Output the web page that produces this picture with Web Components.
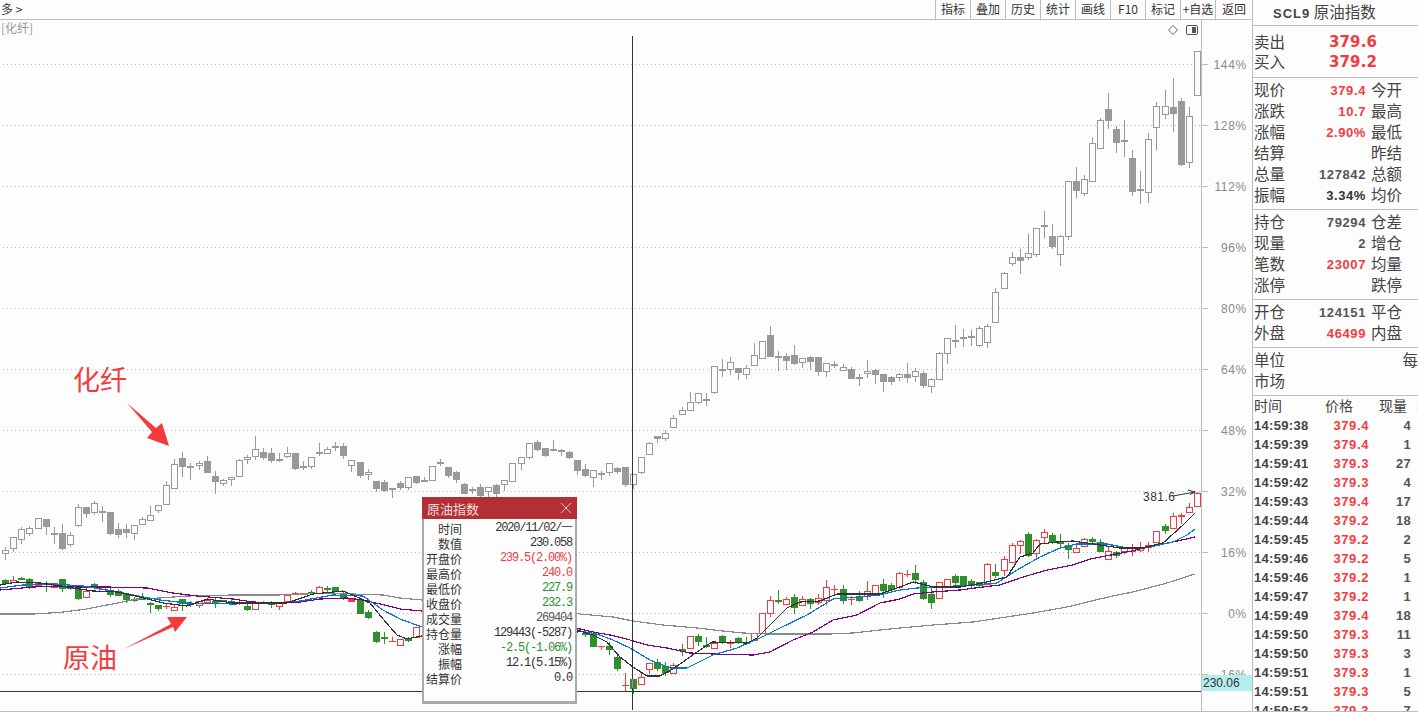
<!doctype html>
<html lang="zh">
<head>
<meta charset="utf-8">
<title>SCL9 原油指数</title>
<style>
  html, body { margin: 0; height: 100%; overflow: hidden; background: #fdfdfd; }
  body { font: 12px "Noto Sans CJK SC", "Liberation Sans", sans-serif; color: #333; }
</style>
</head>
<body>
<tdx-screen>
  <tool-bar slot="bar" title-text="多 &gt;">
    <tool-btn>指标</tool-btn><tool-btn>叠加</tool-btn><tool-btn>历史</tool-btn>
    <tool-btn>统计</tool-btn><tool-btn>画线</tool-btn><tool-btn>F10</tool-btn>
    <tool-btn>标记</tool-btn><tool-btn>+自选</tool-btn><tool-btn wide>返回</tool-btn>
  </tool-bar>

  <kline-chart slot="chart">
    <chart-note style="left:73px;top:343px">化纤</chart-note>
    <chart-note style="left:63px;top:621px">原油</chart-note>
    <data-window caption="原油指数" style="left:422px;top:477px">
      <data-row label="时间">2020/11/02/一</data-row>
      <data-row label="数值">230.058</data-row>
      <data-row label="开盘价" tone="up">239.5(2.00%)</data-row>
      <data-row label="最高价" tone="up">240.0</data-row>
      <data-row label="最低价" tone="down">227.9</data-row>
      <data-row label="收盘价" tone="down">232.3</data-row>
      <data-row label="成交量" tone="mute">269404</data-row>
      <data-row label="持仓量">129443(-5287)</data-row>
      <data-row label="涨幅" tone="down">-2.5(-1.06%)</data-row>
      <data-row label="振幅">12.1(5.15%)</data-row>
      <data-row label="结算价">0.0</data-row>
    </data-window>
  </kline-chart>

  <quote-panel slot="side">
    <quote-section pad="6 5">
      <quote-row big label="卖出" tone="up">379.6</quote-row>
      <quote-row big label="买入" tone="up">379.2</quote-row>
    </quote-section>
    <quote-section>
      <quote-row label="现价" right="今开" tone="up">379.4</quote-row>
      <quote-row label="涨跌" right="最高" tone="up">10.7</quote-row>
      <quote-row label="涨幅" right="最低" tone="up">2.90%</quote-row>
      <quote-row label="结算" right="昨结"></quote-row>
      <quote-row label="总量" right="总额">127842</quote-row>
      <quote-row label="振幅" right="均价" tone="dark">3.34%</quote-row>
    </quote-section>
    <quote-section>
      <quote-row label="持仓" right="仓差">79294</quote-row>
      <quote-row label="现量" right="增仓">2</quote-row>
      <quote-row label="笔数" right="均量" tone="up">23007</quote-row>
      <quote-row label="涨停" right="跌停"></quote-row>
    </quote-section>
    <quote-section>
      <quote-row label="开仓" right="平仓">124151</quote-row>
      <quote-row label="外盘" right="内盘" tone="up">46499</quote-row>
    </quote-section>
    <quote-section>
      <quote-row label="单位" far="每"></quote-row>
      <quote-row label="市场"></quote-row>
    </quote-section>
    <tick-list></tick-list>
  </quote-panel>
</tdx-screen>

<script>
/* page frame: chart column on the left, quote column on the right */
class TdxScreen extends HTMLElement {
  constructor() {
    super();
    this.attachShadow({ mode: "open" }).innerHTML = `
      <style>
        :host { display: grid; grid-template-columns: 1252px 166px; height: 711px; border-bottom: 1px solid #bdbdbd; box-sizing: content-box; overflow: hidden; }
        .left { display: flex; flex-direction: column; min-width: 0; }
        .side { border-left: 1px solid #bdbdbd; min-width: 0; overflow: hidden; }
      </style>
      <div class="left"><slot name="bar"></slot><slot name="chart"></slot></div>
      <div class="side"><slot name="side"></slot></div>`;
  }
}

class ToolBar extends HTMLElement {
  constructor() {
    super();
    this.attachShadow({ mode: "open" }).innerHTML = `
      <style>
        :host { display: flex; justify-content: space-between; height: 19px; border-bottom: 1px solid #bdbdbd; font-size: 12px; line-height: 18px; color: #333; }
        .name { padding-left: 1px; }
        .btns { display: flex; }
      </style>
      <span class="name"></span>
      <div class="btns"><slot></slot></div>`;
  }
  connectedCallback() {
    this.shadowRoot.querySelector(".name").textContent = this.getAttribute("title-text");
  }
}

class ToolBtn extends HTMLElement {
  constructor() {
    super();
    this.attachShadow({ mode: "open" }).innerHTML = `
      <style>
        :host { display: block; box-sizing: border-box; width: 35px; border-left: 1px solid #bdbdbd; text-align: center; white-space: nowrap; }
        :host([wide]) { width: 37px; }
      </style><slot></slot>`;
  }
}

/* page-pixel series read off the screen: [bodyTop, bodyBottom, high, low, kind]
   kind: 0 hollow, 1 filled (grey / green), 2 filled red. top == bottom draws a cross */
const GREY = [
  [550,553,547,559,0],[537,548,537,551,0],[529,539,527,543,0],[528,533,526,535,0],[518,528,518,528,0],
  [519,526,519,534,1],[533,533,527,543,1],[533,548,524,549,1],[535,544,532,546,0],[507,525,504,526,0],
  [507,513,507,517,1],[503,512,501,514,0],[511,511,506,521,1],[512,533,512,534,1],[529,534,523,537,1],
  [529,532,524,537,1],[525,533,525,539,0],[519,524,517,524,0],[515,520,506,520,0],[505,510,505,512,0],
  [485,504,481,504,0],[464,488,459,488,0],[458,466,452,476,1],[466,466,463,479,1],[463,465,461,469,0],
  [461,472,456,472,1],[476,481,471,493,1],[480,483,479,485,0],[477,479,477,485,0],[460,476,459,476,0],
  [457,459,455,463,0],[449,456,436,459,0],[452,457,448,459,1],[453,460,448,462,1],[459,459,453,461,1],
  [453,456,447,457,0],[453,468,453,469,1],[466,466,461,469,1],[457,466,457,468,0],[452,452,443,455,1],
  [449,453,447,453,0],[446,446,442,450,1],[446,455,443,458,1],[460,465,460,471,0],[462,475,462,477,1],
  [472,474,469,479,0],[481,488,481,491,1],[482,490,480,491,1],[488,488,488,497,1],[483,487,481,489,1],
  [477,487,477,489,0],[476,482,476,483,1],[480,480,477,481,1],[466,480,466,480,0],[462,463,459,465,1],
  [467,475,467,477,1],[472,479,471,482,1],[484,493,483,493,1],[489,489,487,493,1],[487,495,484,496,1],
  [487,491,487,496,0],[485,493,484,497,1],[480,484,480,490,0],[463,481,463,481,0],[457,463,457,469,0],
  [443,457,443,458,0],[442,449,440,450,1],[448,455,448,456,1],[449,449,440,450,1],[450,450,449,455,1],
  [452,457,451,458,1],[460,470,460,474,1],[469,475,464,476,1],[470,477,470,486,0],[473,473,471,479,1],
  [463,472,463,475,0],[468,471,467,473,1],[467,484,467,486,1],[474,484,474,488,0],[457,472,457,473,0],
  [443,454,442,454,0],[436,438,436,442,1],[433,438,430,440,0],[418,427,415,427,0],[410,414,407,414,0],
  [402,410,392,410,0],[393,402,393,403,0],[399,399,393,405,1],[366,392,366,393,0],[369,369,359,376,1],
  [362,369,357,374,0],[368,372,368,379,1],[368,374,365,378,0],[355,365,343,365,0],[341,358,341,358,0],
  [335,356,326,356,1],[356,356,351,370,1],[356,360,353,369,1],[355,363,345,364,1],[358,362,358,367,0],
  [357,361,356,369,1],[357,371,357,375,1],[363,371,363,376,0],[364,364,361,367,1],[367,370,364,370,0],
  [369,378,367,378,1],[377,377,374,385,1],[371,373,360,377,0],[370,374,369,383,1],[374,381,374,391,1],
  [377,381,376,384,1],[374,377,373,380,0],[374,377,363,382,1],[371,376,368,381,0],[373,385,371,387,1],
  [379,386,378,392,0],[353,379,352,379,0],[338,353,338,363,0],[340,340,325,347,1],[337,337,329,346,1],
  [336,336,330,345,1],[328,345,326,346,0],[326,342,324,347,0],[292,322,288,322,0],[273,288,272,288,0],
  [257,263,252,265,0],[257,260,249,273,1],[253,257,234,259,0],[228,254,228,256,0],[225,225,211,237,1],
  [236,246,224,248,1],[236,254,235,265,0],[181,236,181,239,0],[181,190,167,197,1],[179,193,175,195,0],
  [143,181,137,181,0],[120,148,118,148,0],[109,120,93,128,1],[129,142,126,152,1],[140,140,120,156,1],
  [158,191,150,195,1],[189,189,171,203,1],[139,192,133,202,0],[106,127,102,149,0],[106,114,90,118,0],
  [107,113,78,131,1],[101,164,98,165,1],[116,162,107,167,0],[51,95,51,95,0]
];

const COLOR = [
  [580,583,579,584,1],[580,582,576,582,0],[578,578,577,579,1],[579,586,578,588,1],[583,585,583,585,0],
  [583,583,581,591,1],[583,587,583,587,0],[579,588,579,591,1],[587,587,585,589,1],[589,598,589,599,1],
  [591,597,588,597,0],[584,587,583,587,1],[587,591,587,591,0],[590,594,587,596,1],[591,595,589,595,1],
  [594,599,594,602,1],[599,599,597,601,1],[598,598,593,599,1],[603,603,602,612,1],[605,608,605,610,1],
  [606,606,603,608,2],[607,610,604,610,0],[599,603,599,610,1],[603,603,601,606,1],[601,605,601,607,0],
  [600,602,600,602,0],[601,601,597,607,1],[600,601,600,601,1],[601,601,599,603,1],[603,603,601,604,2],
  [606,609,603,610,1],[602,609,602,609,0],[602,602,601,603,2],[603,603,601,607,1],[602,606,602,609,0],
  [595,601,595,601,0],[593,593,592,594,2],[593,594,593,594,2],[592,592,590,594,1],[587,593,586,593,0],
  [588,588,586,591,1],[587,591,587,591,1],[593,598,591,599,1],[599,601,599,601,2],[600,613,600,613,1],
  [612,617,610,618,1],[632,641,631,642,1],[637,637,632,643,1],[641,641,637,641,2],[639,645,639,645,0],
  [639,639,637,641,1],[627,637,627,637,0],
  null,null,null,null,null,null,null,null,null,null,null,null,null,null,null,null,null,null,null,
  [630,630,629,632,1],[633,633,631,636,1],[634,646,634,646,1],[646,646,646,649,2],[646,649,642,654,1],
  [657,668,655,670,1],[685,685,673,690,2],[679,688,679,693,1],[677,684,673,684,0],[663,669,663,673,0],
  [662,668,659,670,1],[666,672,662,675,1],[665,673,663,673,0],[649,649,644,655,1],[636,648,636,648,0],
  [636,641,634,645,1],[645,645,637,647,1],[643,648,643,648,0],[636,642,635,643,1],[643,643,640,647,2],
  [638,641,637,643,1],[642,642,637,643,1],[633,640,633,640,0],[613,633,613,633,0],[600,613,596,616,0],
  [600,600,590,603,1],[599,604,597,604,0],[597,607,594,613,1],[599,605,596,605,0],[599,603,598,608,1],
  [598,602,594,604,0],[587,600,580,604,0],[589,589,585,593,2],[589,600,585,603,1],[599,599,596,604,2],
  [597,600,591,601,1],[591,596,581,599,0],[585,593,585,593,0],[584,590,579,597,1],[585,589,583,592,1],
  [573,587,572,588,0],[574,574,570,576,2],[573,579,565,583,1],[582,598,580,599,1],[594,602,588,608,1],
  [582,598,582,598,0],[579,587,579,587,0],[576,582,574,585,1],[576,584,576,585,1],[581,585,579,587,1],
  [582,585,582,587,1],[564,584,563,584,0],[572,575,564,577,1],[559,570,556,575,0],[545,562,543,562,0],
  [541,545,540,553,0],[534,555,532,556,1],[540,553,539,557,0],[532,537,529,543,0],[535,541,533,543,1],
  [542,542,534,548,1],[545,549,543,558,1],[548,552,545,552,0],[539,546,538,546,0],[539,541,537,543,1],
  [542,551,539,551,1],[551,559,547,559,0],[552,555,551,557,1],[548,551,547,553,0],[551,551,544,555,2],
  [548,550,542,551,0],[545,547,542,551,0],[531,542,531,542,0],[526,530,524,533,1],[516,528,513,528,0],
  [515,516,513,523,0],[507,512,503,512,0],[493,506,492,506,0]
];

const LINES = [
  { color: "#8a8a8a", pts: "0,614 33,614 50,613 63,612 87,609 107,605 123,602 137,599 160,598 187,596 233,595 277,595 333,593 353,594 383,595 400,598 422,600 577,613 580,614 613,617 633,621 663,625 697,628 723,631 743,633 767,634 807,634 830,634 853,633 880,630 900,628 933,625 973,622 1033,613 1067,607 1100,599 1113,596 1133,592 1167,583 1195,574" },
  { color: "#800080", pts: "0,590 33,587 60,586 77,587 107,587 147,588 173,593 197,596 233,599 253,602 277,603 300,602 320,599 347,598 363,600 380,604 400,609 422,611 580,629 593,632 610,635 630,640 647,645 667,648 690,653 713,654 753,655 770,652 793,640 813,632 833,620 857,615 880,603 900,599 913,594 933,592 960,590 983,587 1000,585 1020,578 1047,570 1073,565 1090,559 1127,552 1157,545 1173,542 1195,537" },
  { color: "#0078d4", pts: "0,588 23,585 53,584 83,586 113,591 133,595 160,600 187,603 233,604 277,603 300,601 333,595 363,596 383,610 400,619 422,627 580,631 597,634 613,640 630,648 650,660 670,668 687,668 713,655 737,648 760,638 780,628 807,615 833,599 857,597 880,595 900,590 917,588 937,587 973,585 997,583 1017,570 1040,557 1060,548 1077,544 1107,544 1127,548 1150,547 1173,542 1187,535 1195,529" },
  { color: "#333333", pts: "0,585 17,582 40,583 67,587 93,591 117,592 140,597 163,603 187,606 207,599 233,603 263,603 287,603 313,594 343,591 357,597 370,603 383,619 397,635 407,639 422,636 580,631 593,635 607,642 620,657 633,667 647,676 660,676 673,669 697,652 712,642 747,643 757,638 770,625 787,608 800,602 820,601 837,594 880,594 897,588 913,582 933,587 960,587 983,583 1007,577 1020,557 1033,553 1040,544 1057,542 1073,541 1100,545 1120,548 1143,548 1163,543 1183,525 1195,513" }
];

const AXIS = ["144%","128%","112%","96%","80%","64%","48%","32%","16%","0%"];

const svgCandles = (rows, hollow, filled, alt) => rows.map((c, i) => {
  if (!c) return "";
  const x = Math.round(5.3 + 8.05 * i) + 0.5;
  const [t, b, hi, lo, kind] = c;
  const col = kind === 0 ? hollow : kind === 2 ? alt : filled;
  let s = `<path d="M${x} ${hi}V${lo + 1}" stroke="${col}"/>`;
  if (t === b) s += `<rect x="${x - 3.5}" y="${t}" width="7" height="${kind === 2 ? 1 : 2}" fill="${col}"/>`;
  else if (kind === 0) s += `<rect x="${x - 3}" y="${t + 0.5}" width="6" height="${b - t}" fill="#fdfdfd" stroke="${col}"/>`;
  else s += `<rect x="${x - 3.5}" y="${t}" width="7" height="${b - t + 1}" fill="${col}"/>`;
  return s;
}).join("");

const dotted = y => `<path d="M3 ${y}.5H1201" stroke="#bbb" stroke-dasharray="1 3"/><path d="M1202 ${y}.5h6" stroke="#bbb"/>`;

class KlineChart extends HTMLElement {
  constructor() {
    super();
    const grid = AXIS.concat("-16%").map((t, i) => {
      const y = 64 + 61 * i;
      return dotted(y) + `<text x="1247" y="${y + 4.5}" text-anchor="end">${t}</text>`;
    }).join("");
    this.attachShadow({ mode: "open" }).innerHTML = `
      <style>
        :host { display: block; position: relative; flex: 1; }
        svg { display: block; }
        text { font: 12px "Liberation Sans", sans-serif; letter-spacing: .7px; fill: #8a8a8a; }
        .candles path, .candles rect, .hair, polyline { shape-rendering: crispEdges; }
        .tag { fill: #333; }
        .stamp { font: 12px "Noto Sans CJK SC", sans-serif; letter-spacing: 0; fill: #999; }
      </style>
      <svg width="1252" height="691" viewBox="0 20 1252 691">
        ${grid}
        <path class="hair" d="M1201.5 20V711" stroke="#bdbdbd"/>
        <text class="stamp" x="1" y="33">[化纤]</text>
        <path d="M1173 25.5l4.5 4.5-4.5 4.5-4.5-4.5z" fill="none" stroke="#666"/>
        <rect x="1186.5" y="25.5" width="11" height="9" rx="1.5" fill="#fdfdfd" stroke="#555"/>
        <rect x="1192" y="27" width="4" height="6" fill="#555"/>
        <g class="candles">${svgCandles(GREY, "#999", "#999", "#999")}</g>
        <g class="candles">${svgCandles(COLOR, "#f33b3f", "#2f8f2f", "#f33b3f")}</g>
        ${LINES.map(l => `<polyline points="${l.pts}" fill="none" stroke="${l.color}" stroke-width="1.2"/>`).join("")}
        <path class="hair" d="M632.5 36V710M0 691.5H1201" stroke="#333" fill="none"/>
        <path class="hair" d="M632.5 679V688" stroke="#d860d8"/>
        <text class="tag" x="1143" y="501" style="letter-spacing:.5px">381.6</text>
        <path d="M1173 496L1195 492M1188 490L1195 492L1190 494.5" fill="none" stroke="#333"/>
        <path d="M127 403L156 428L162 423L169 446L147 438L152 432Z" fill="#f33b3f"/>
        <path d="M124 649L171 624L167 617L187 617L175 632L173 627Z" fill="#f33b3f"/>
        <rect x="1202" y="675" width="50" height="16" fill="#b4eeee"/>
        <text x="1203" y="687" style="fill:#333;letter-spacing:0">230.06</text>
      </svg>
      <slot></slot>`;
  }
}

class ChartNote extends HTMLElement {
  constructor() {
    super();
    this.attachShadow({ mode: "open" }).innerHTML = `
      <style>
        :host { position: absolute; font: 27px/1.15 "Noto Sans CJK SC", sans-serif; color: #f33b3f; white-space: nowrap; }
      </style><slot></slot>`;
  }
}

/* floating data window over the chart */
class DataWindow extends HTMLElement {
  constructor() {
    super();
    this.attachShadow({ mode: "open" }).innerHTML = `
      <style>
        :host { position: absolute; display: block; box-sizing: border-box; width: 155px; height: 207px; background: #fdfdfd; border: 2px solid #aaa; border-top: 0; border-bottom-width: 3px; }
        header { display: flex; align-items: center; justify-content: space-between; height: 22px; margin: 0 -2px; padding: 0 5px; background: #b32f33; color: #f4dede; font-size: 13px; }
        .rows { padding-top: 2px; }
        svg { display: block; }
      </style>
      <header><span class="cap"></span>
        <svg width="12" height="12" viewBox="0 0 12 12"><path d="M1 1L11 11M11 1L1 11" stroke="#e8c4c4"/></svg>
      </header>
      <div class="rows"><slot></slot></div>`;
  }
  connectedCallback() {
    this.shadowRoot.querySelector(".cap").textContent = this.getAttribute("caption");
  }
}

class DataRow extends HTMLElement {
  constructor() {
    super();
    this.attachShadow({ mode: "open" }).innerHTML = `
      <style>
        :host { display: flex; justify-content: space-between; height: 15px; line-height: 15px; padding-right: 3px; color: #333; white-space: nowrap; }
        :host([tone="up"]) .v { color: #f33b3f; }
        :host([tone="down"]) .v { color: #2f8f2f; }
        :host([tone="mute"]) .v { color: #555; }
        .k { width: 36px; padding-left: 2px; text-align: right; font-size: 12px; }
        .v { font: 12px/15px "Liberation Mono", monospace; letter-spacing: -1.2px; }
      </style>
      <span class="k"></span><span class="v"><slot></slot></span>`;
  }
  connectedCallback() {
    this.shadowRoot.querySelector(".k").textContent = this.getAttribute("label");
  }
}

class QuotePanel extends HTMLElement {
  constructor() {
    super();
    this.attachShadow({ mode: "open" }).innerHTML = `
      <style>
        :host { display: block; height: 711px; font-size: 15.5px; color: #444; overflow: hidden; }
        .title { box-sizing: border-box; height: 26px; border-bottom: 1px solid #bdbdbd; line-height: 23px; padding-left: 20px; white-space: nowrap; }
        b { font: bold 13px "Liberation Sans", sans-serif; letter-spacing: 1px; color: #444; }
      </style>
      <div class="title"><b>SCL9</b> 原油指数</div>
      <slot></slot>`;
  }
}

class QuoteSection extends HTMLElement {
  constructor() {
    super();
    this.attachShadow({ mode: "open" }).innerHTML = `
      <style>
        :host { display: block; padding: 2px 0 3px; border-bottom: 1px solid #bdbdbd; }
        :host([pad]) { padding: 6px 0 5px; }
      </style><slot></slot>`;
  }
}

class QuoteRow extends HTMLElement {
  constructor() {
    super();
    this.attachShadow({ mode: "open" }).innerHTML = `
      <style>
        :host { display: grid; grid-template-columns: 32px 80px 5px 48px; height: 21px; line-height: 19px; padding-left: 1px; white-space: nowrap; }
        :host([big]) { height: 20px; line-height: 19px; grid-template-columns: 32px 91px; }
        .v { grid-column: 2; text-align: right; font: bold 13px/21px "Liberation Sans", sans-serif; letter-spacing: .6px; color: #555; }
        :host([big]) .v { font: bold 15px/21px "DejaVu Sans", sans-serif; letter-spacing: .1px; }
        :host([tone="up"]) .v { color: #f33b3f; }
        :host([tone="dark"]) .v { color: #333; }
        .r { grid-column: 4; }
        .far { grid-column: 2 / 5; text-align: right; padding-right: 1px; }
      </style>
      <span class="k"></span><span class="v"><slot></slot></span><span class="r"></span>`;
  }
  connectedCallback() {
    const sr = this.shadowRoot;
    sr.querySelector(".k").textContent = this.getAttribute("label");
    sr.querySelector(".r").textContent = this.getAttribute("right") || "";
    if (this.hasAttribute("far")) {
      const v = sr.querySelector(".v");
      v.className = "far";
      v.textContent = this.getAttribute("far");
    }
  }
}

const TICKS = [
  ["14:59:38","379.4",4],["14:59:39","379.4",1],["14:59:41","379.3",27],["14:59:42","379.3",4],
  ["14:59:43","379.4",17],["14:59:44","379.2",18],["14:59:45","379.2",2],["14:59:46","379.2",5],
  ["14:59:46","379.2",1],["14:59:47","379.2",1],["14:59:49","379.4",18],["14:59:50","379.3",11],
  ["14:59:50","379.3",3],["14:59:51","379.3",1],["14:59:51","379.3",5],["14:59:52","379.3",7]
];

class TickList extends HTMLElement {
  constructor() {
    super();
    this.attachShadow({ mode: "open" }).innerHTML = `
      <style>
        :host { display: block; font-size: 14px; overflow: hidden; height: 315px; }
        .row { display: grid; grid-template-columns: 57px 58px 42px 20px; height: 19px; line-height: 19px; padding-left: 1px; white-space: nowrap; }
        .head { height: 20px; line-height: 18px; color: #444; grid-template-columns: 71px 54px 38px 20px; }
        .t, .p, .q { font: bold 13px/19px "Liberation Sans", sans-serif; letter-spacing: .3px; color: #444; }
        .p { color: #f33b3f; text-align: right; letter-spacing: .6px; }
        .q { text-align: right; color: #555; }
      </style>
      <div class="row head"><span>时间</span><span>价格</span><span>现量</span><span>笔</span></div>
      ${TICKS.map(t => `<div class="row"><span class="t">${t[0]}</span><span class="p">${t[1]}</span><span class="q">${t[2]}</span></div>`).join("")}`;
  }
}

customElements.define("tdx-screen", TdxScreen);
customElements.define("tool-bar", ToolBar);
customElements.define("tool-btn", ToolBtn);
customElements.define("kline-chart", KlineChart);
customElements.define("chart-note", ChartNote);
customElements.define("data-window", DataWindow);
customElements.define("data-row", DataRow);
customElements.define("quote-panel", QuotePanel);
customElements.define("quote-section", QuoteSection);
customElements.define("quote-row", QuoteRow);
customElements.define("tick-list", TickList);
</script>
</body>
</html>
